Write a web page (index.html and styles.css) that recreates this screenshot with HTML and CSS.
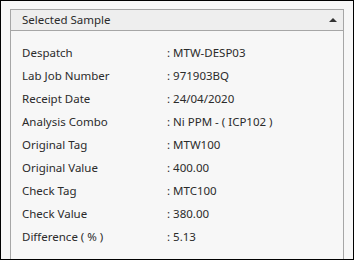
FILE: index.html
```html
<!DOCTYPE html>
<html lang="en">
<head>
    <meta charset="UTF-8">
    <meta name="viewport" content="width=device-width, initial-scale=1.0">
    <title>Selected Sample</title>
    <link rel="stylesheet" href="styles.css">
</head>
<body>

    <div class="frame">
        <div class="panel">
            <div class="panel-header">
                <span class="panel-title">Selected Sample</span>
                <span class="collapse-arrow"></span>
            </div>
            <div class="panel-body">
                <div class="row"><span class="label">Despatch</span><span class="value">: MTW-DESP03</span></div>
                <div class="row"><span class="label">Lab Job Number</span><span class="value">: 971903BQ</span></div>
                <div class="row"><span class="label">Receipt Date</span><span class="value">: 24/04/2020</span></div>
                <div class="row"><span class="label">Analysis Combo</span><span class="value">: Ni PPM - ( ICP102 )</span></div>
                <div class="row"><span class="label">Original Tag</span><span class="value">: MTW100</span></div>
                <div class="row"><span class="label">Original Value</span><span class="value">: 400.00</span></div>
                <div class="row"><span class="label">Check Tag</span><span class="value">: MTC100</span></div>
                <div class="row"><span class="label">Check Value</span><span class="value">: 380.00</span></div>
                <div class="row"><span class="label">Difference ( % )</span><span class="value">: 5.13</span></div>
            </div>
        </div>
    </div>

</body>
</html>
```

FILE: styles.css
```css
html, body {
    margin: 0;
    padding: 0;
}
body {
    font-family: "Noto Sans", "Open Sans", sans-serif;
    font-size: 11.5px;
    color: #2b2b2b;
    background-color: #ffffff;
}
.frame {
    box-sizing: border-box;
    width: 354px;
    height: 260px;
    border: 1px solid #000000;
    background-color: #f7f7f7;
    padding: 8px 9px 0 9px;
    overflow: hidden;
}
.panel {
    height: 100%;
    border: 1px solid #a6a6a6;
    border-bottom: none;
}
.panel-header {
    display: flex;
    align-items: center;
    justify-content: space-between;
    height: 20px;
    padding: 0 6px 0 11px;
    background-color: #eeeeee;
    border-bottom: 1px solid #a6a6a6;
}
.panel-title {
    line-height: 20px;
}
.collapse-arrow {
    width: 0;
    height: 0;
    border-left: 4px solid transparent;
    border-right: 4px solid transparent;
    border-bottom: 4px solid #333333;
}
.panel-body {
    padding: 10px 11px 0 11px;
}
.row {
    display: flex;
    height: 23px;
    line-height: 23px;
}
.label {
    width: 145px;
}
```
